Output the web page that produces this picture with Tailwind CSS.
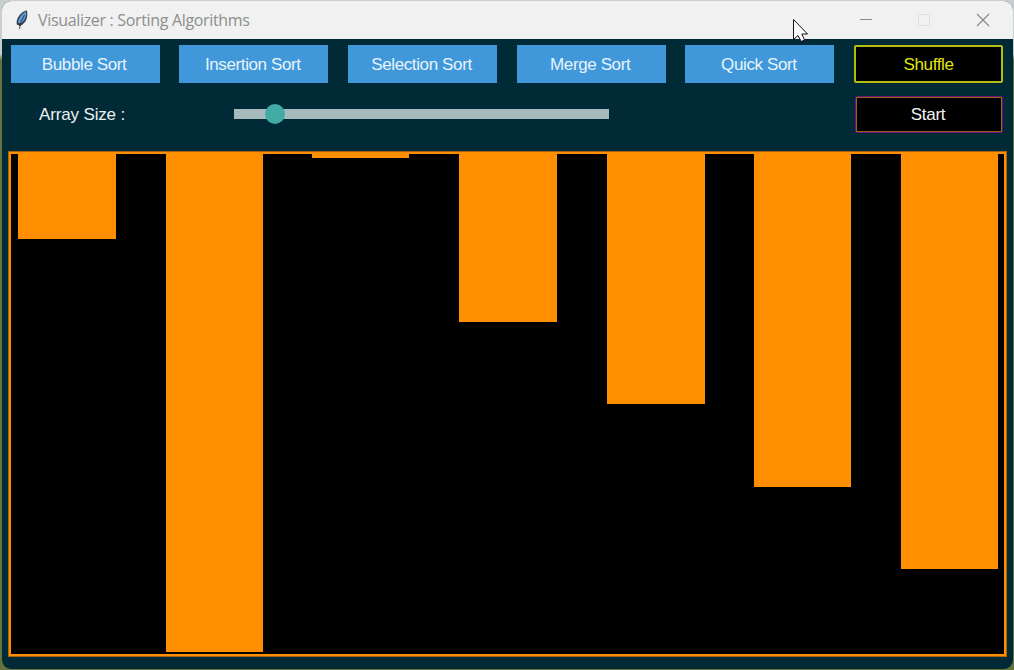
<!DOCTYPE html>
<html lang="en">
<head>
<meta charset="utf-8">
<title>Visualizer : Sorting Algorithms</title>
<script src="https://cdn.jsdelivr.net/npm/@tailwindcss/browser@4"></script>
</head>
<body class="w-[1014px] h-[670px] overflow-hidden bg-linear-to-b from-[#c9cfce] from-[8%] to-[#66723c] to-[9%] pl-[2px] pr-px pt-px pb-px font-['Liberation_Sans',Arial,sans-serif]">
<main class="relative flex h-[668px] w-[1011px] flex-col overflow-hidden rounded-[9px] bg-[#002b36]">
  <header class="flex h-[38px] shrink-0 items-center bg-[#f1f1f1] pl-[13px] text-[#8c8f8c]">
    <svg class="h-[22px] w-[14px]" viewBox="0 0 14 22">
      <path d="M11.8 1.2C7.2 2.4 1.9 7.5 1.6 12.8L1.8 15.5 5 17C11.6 13.8 13.4 7.3 11.8 1.2Z" fill="#38414a"/>
      <path d="M10.9 2.4C7.2 4.6 3.2 9.2 3 14L6.2 14.2C10.4 10.4 11.8 6.5 10.9 2.4Z" fill="#5a9cdb"/>
      <path d="M9.5 6 5.3 14.5 4.6 20" fill="none" stroke="#222" stroke-width=".8"/>
    </svg>
    <h1 class="ml-[9px] whitespace-nowrap font-['Open_Sans','Noto_Sans',sans-serif] text-[16px] leading-[22px] tracking-[-0.33px]">Visualizer : Sorting Algorithms</h1>
    <div class="ml-auto mr-[23px] flex items-center gap-[45px]">
      <svg class="h-[14px] w-[14px]" viewBox="0 0 14 14" fill="none" stroke="#888b88"><path d="M2 6.5H14"/></svg>
      <svg class="h-[14px] w-[14px]" viewBox="0 0 14 14" fill="none" stroke="#dfe1dd"><rect x="1.5" y="1.5" width="11" height="11" rx="1"/></svg>
      <svg class="h-[14px] w-[14px]" viewBox="0 0 14 14" fill="none" stroke="#858985" stroke-width="1.1"><path d="M1 1 13 13M13 1 1 13"/></svg>
    </div>
  </header>
  <nav class="ml-[8.6px] mt-[6px] grid h-[38px] w-[992.5px] shrink-0 grid-cols-6 gap-[19.6px] text-[17px] tracking-[-0.38px] text-[#e7f3fb]">
    <button class="bg-[#4098da] pr-[2px] pt-px">Bubble Sort</button>
    <button class="bg-[#4098da] pr-[2px] pt-px">Insertion Sort</button>
    <button class="bg-[#4098da] pr-[2px] pt-px">Selection Sort</button>
    <button class="bg-[#4098da] pr-[2px] pt-px">Merge Sort</button>
    <button class="bg-[#4098da] pr-[2px] pt-px">Quick Sort</button>
    <button class="rounded-[2px] border-2 border-[#b4bd0c] bg-black pt-px text-[#e2e60a]">Shuffle</button>
  </nav>
  <section class="mt-[12px] flex h-[38px] shrink-0 items-center pl-[37px] pr-[10px]">
    <label class="w-[195px] whitespace-nowrap pt-[2px] text-[17px] tracking-[-0.15px] text-[#edf0f1]">Array Size :</label>
    <div class="flex h-[10px] w-[375px] items-center bg-[#a7bbbe] pl-[31px]">
      <div class="h-5 w-5 shrink-0 rounded-full bg-[#43aba5]"></div>
    </div>
    <button class="ml-auto flex h-[37px] w-[148px] rounded-[2px] border border-[#72107a] bg-black text-[17px] tracking-[-0.3px] text-[#f4f4f4]"><span class="flex h-full w-full items-center justify-center border border-[#94661b] pr-[2px] pt-px">Start</span></button>
  </section>
  <section class="ml-[6px] mt-[18px] h-[506px] w-[999px] shrink-0 border border-[#a8650f]">
    <div class="flex h-full items-start justify-between border-2 border-[#ff8f00] bg-black pl-[7px] pr-[6px]">
      <div class="h-[85px] w-[98px] bg-[#ff8f00]"></div>
      <div class="h-[498px] w-[97px] bg-[#ff8f00]"></div>
      <div class="h-[4px] w-[97px] bg-[#ff8f00]"></div>
      <div class="h-[168px] w-[98px] bg-[#ff8f00]"></div>
      <div class="h-[250px] w-[98px] bg-[#ff8f00]"></div>
      <div class="h-[333px] w-[97px] bg-[#ff8f00]"></div>
      <div class="h-[415px] w-[97px] bg-[#ff8f00]"></div>
    </div>
  </section>
  <svg class="absolute left-[791px] top-[18px] h-[24px] w-[16px]" viewBox="0 0 16 24">
    <path d="M.5.5V20.5L5 16.5 8.3 22.5 11.5 21 8.8 15H14.5Z" fill="#fff" stroke="#111"/>
  </svg>
</main>
</body>
</html>
